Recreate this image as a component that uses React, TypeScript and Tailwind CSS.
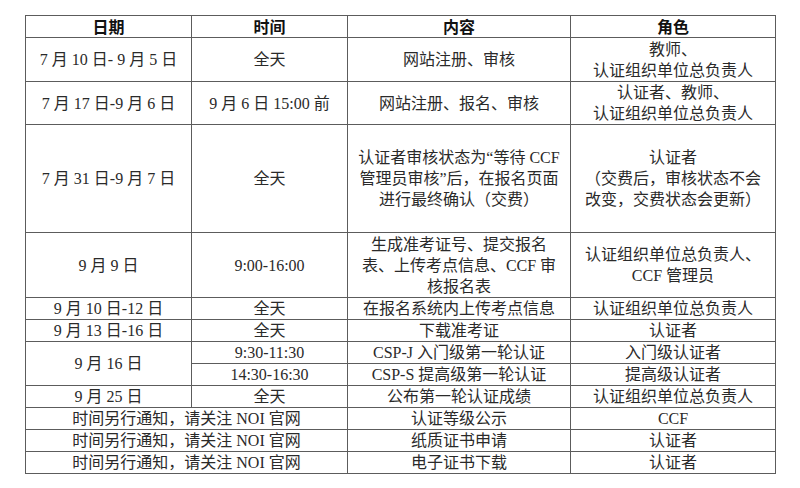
import React from "react";

type Cell = { text: React.ReactNode; cls?: string };

const L = (lines: string[]) => (
  <>
    {lines.map((l, i) => (
      <React.Fragment key={i}>
        {i > 0 && <br />}
        {l}
      </React.Fragment>
    ))}
  </>
);

const head = ["日期", "时间", "内容", "角色"];

const cells: Cell[] = [
  { text: "7 月 10 日- 9 月 5 日" },
  { text: "全天" },
  { text: "网站注册、审核" },
  { text: L(["教师、", "认证组织单位总负责人"]) },

  { text: "7 月 17 日-9 月 6 日" },
  { text: "9 月 6 日 15:00 前" },
  { text: "网站注册、报名、审核" },
  { text: L(["认证者、教师、", "认证组织单位总负责人"]) },

  { text: "7 月 31 日-9 月 7 日" },
  { text: "全天" },
  { text: L(["认证者审核状态为“等待 CCF", "管理员审核”后，在报名页面", "进行最终确认（交费）"]) },
  { text: L(["认证者", "（交费后，审核状态不会", "改变，交费状态会更新）"]) },

  { text: "9 月 9 日" },
  { text: "9:00-16:00" },
  { text: L(["生成准考证号、提交报名", "表、上传考点信息、CCF 审", "核报名表"]) },
  { text: L(["认证组织单位总负责人、", "CCF 管理员"]) },

  { text: "9 月 10 日-12 日" },
  { text: "全天" },
  { text: "在报名系统内上传考点信息" },
  { text: "认证组织单位总负责人" },

  { text: "9 月 13 日-16 日" },
  { text: "全天" },
  { text: "下载准考证" },
  { text: "认证者" },

  { text: "9 月 16 日", cls: "row-span-2" },
  { text: "9:30-11:30" },
  { text: "CSP-J 入门级第一轮认证" },
  { text: "入门级认证者" },

  { text: "14:30-16:30" },
  { text: "CSP-S 提高级第一轮认证" },
  { text: "提高级认证者" },

  { text: "9 月 25 日" },
  { text: "全天" },
  { text: "公布第一轮认证成绩" },
  { text: "认证组织单位总负责人" },

  { text: "时间另行通知，请关注 NOI 官网", cls: "col-span-2" },
  { text: "认证等级公示" },
  { text: "CCF" },

  { text: "时间另行通知，请关注 NOI 官网", cls: "col-span-2" },
  { text: "纸质证书申请" },
  { text: "认证者" },

  { text: "时间另行通知，请关注 NOI 官网", cls: "col-span-2" },
  { text: "电子证书下载" },
  { text: "认证者" },
];

export default function App() {
  return (
    <div className="w-[800px] h-[488px] bg-white pt-[15px] pl-[25px]">
      <div
        className="grid w-[751px] grid-cols-[165px_155px_222px_204px] grid-rows-[21px_43px_42px_107px_64px_repeat(8,21px)] gap-px bg-[#5c5c5c] p-px text-[16px] leading-[21px] text-[#2a2a2a]"
        style={{ fontFamily: '"Liberation Serif", "Noto Sans CJK SC", serif' }}
      >
        {head.map((h) => (
          <div
            key={h}
            className="flex items-center justify-center bg-white font-bold text-[#111]"
            style={{ fontFamily: '"Noto Sans CJK SC", sans-serif' }}
          >
            {h}
          </div>
        ))}
        {cells.map((c, i) => (
          <div
            key={i}
            className={`flex items-center justify-center bg-white text-center whitespace-nowrap ${c.cls ?? ""}`}
          >
            <span>{c.text}</span>
          </div>
        ))}
      </div>
    </div>
  );
}
